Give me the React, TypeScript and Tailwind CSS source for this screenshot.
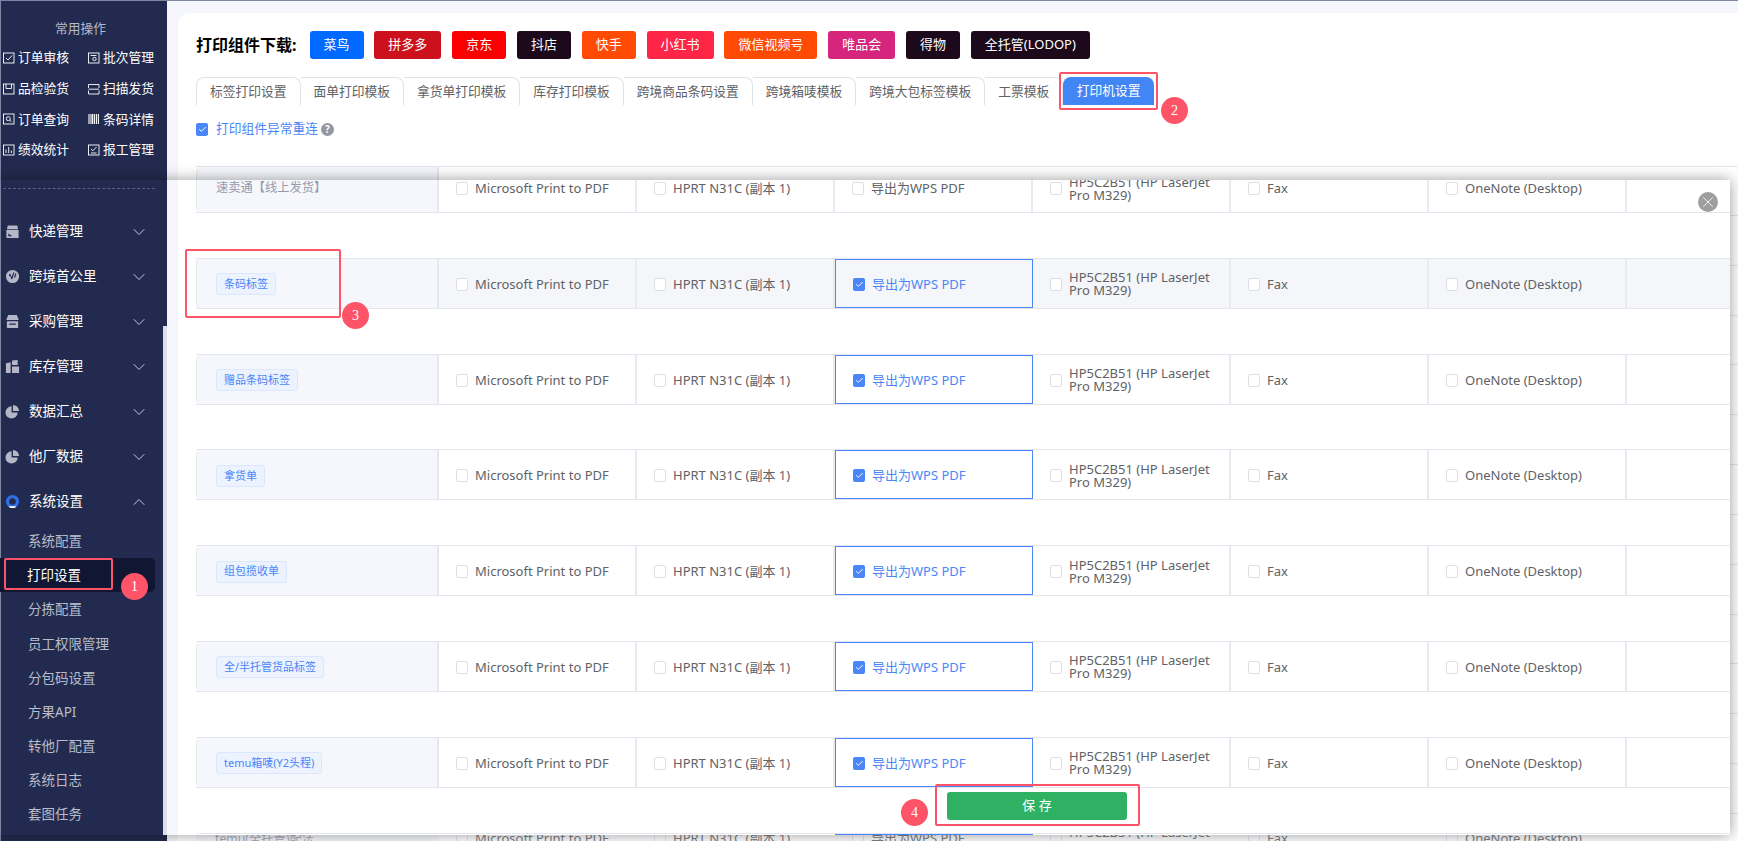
import type { ReactNode } from 'react';
import { ChevronDown, ChevronUp, X, Check } from 'lucide-react';

const FONT = "font-['Noto_Sans','Noto_Sans_CJK_SC',sans-serif]";

const PRINTERS = ['Microsoft Print to PDF', 'HPRT N31C (副本 1)', '导出为WPS PDF', 'HP5C2B51 (HP LaserJet Pro M329)', 'Fax', 'OneNote (Desktop)'];

const DOWNLOADS = [
  { name: '菜鸟', color: 'bg-[#0069ff]' },
  { name: '拼多多', color: 'bg-[#cc101c]' },
  { name: '京东', color: 'bg-[#fa0000]' },
  { name: '抖店', color: 'bg-[#1c0a1c]' },
  { name: '快手', color: 'bg-[#ff4a06]' },
  { name: '小红书', color: 'bg-[#ff2546]' },
  { name: '微信视频号', color: 'bg-[#ff4a06]' },
  { name: '唯品会', color: 'bg-[#d5257c]' },
  { name: '得物', color: 'bg-[#1c0a1c]' },
  { name: '全托管(LODOP)', color: 'bg-[#1c0a1c]' },
];

const TABS = ['标签打印设置', '面单打印模板', '拿货单打印模板', '库存打印模板', '跨境商品条码设置', '跨境箱唛模板', '跨境大包标签模板', '工票模板'];

const ROWS = [
  { label: '速卖通【线上发货】', plain: true },
  { label: '条码标签', highlight: true },
  { label: '赠品条码标签' },
  { label: '拿货单' },
  { label: '组包揽收单' },
  { label: '全/半托管货品标签' },
  { label: 'temu箱唛(Y2头程)' },
];

const SUB_MENU = ['系统配置', '打印设置', '分拣配置', '员工权限管理', '分包码设置', '方果API', '转他厂配置', '系统日志', '套图任务'];

function QuickIcon({ children }: { children: ReactNode }) {
  return (
    <svg viewBox="0 0 12 12" className="w-3 h-3 shrink-0" fill="none" stroke="#fff" strokeWidth="0.9">
      {children}
    </svg>
  );
}

const QUICK_OPS: { name: string; icon: ReactNode }[] = [
  { name: '订单审核', icon: <><rect x="0.5" y="1" width="10.5" height="10" /><path d="M3 6l2 2 4-4.5" /></> },
  { name: '批次管理', icon: <><rect x="0.5" y="1" width="10.5" height="10" /><path d="M2.5 3.5h6" /><circle cx="6.5" cy="7" r="1.7" /></> },
  { name: '品检验货', icon: <><rect x="0.5" y="1" width="10.5" height="10" /><path d="M3 1v4.5h5.5V1" /></> },
  { name: '扫描发货', icon: <><path d="M0.5 5V1.5h10.5V5M0.5 7.5V11h10.5V7.5" /><path d="M0.5 6.2h10.5" /></> },
  { name: '订单查询', icon: <><rect x="0.5" y="1" width="10.5" height="10" /><circle cx="5.3" cy="5.7" r="2" /><path d="M6.8 7.2l1.7 1.6" /></> },
  { name: '条码详情', icon: <path d="M1 1v10M3 1v10M4.6 1v10M6.4 1v10M8.4 1v10M10.4 1v10" strokeWidth="1.1" /> },
  { name: '绩效统计', icon: <><rect x="0.5" y="1" width="10.5" height="10" /><path d="M3 9V5.5M5.7 9V3M8.4 9V6.5" /></> },
  { name: '报工管理', icon: <><rect x="0.5" y="1" width="10.5" height="10" /><path d="M3 5l1.8 1.8L8.5 3M3 9h5.5" /></> },
];

const BoxIcon = (
  <path d="M2 5.500l1-4h10l1 4zM1.500 6.500h13V14a1 1 0 0 1-1 1h-11a1 1 0 0 1-1-1zM3.500 10.500v2.500h3.500v-1.200H4.800V10.500z" fillRule="evenodd" />
);
const GlobeIcon = (
  <path d="M8 1a7 7 0 1 0 0 14A7 7 0 0 0 8 1zM4 7l1.500-2.500 1.500 4 2-5 1 .500-2.300 7-1.200-.500-1-3.500-.500 1zM11 4.500l1.200.800-1.500 4.200-1-.500z" fillRule="evenodd" />
);
const StoreIcon = (
  <path d="M3.500 1h9l2 4.500a1 1 0 0 1-1 1h-11a1 1 0 0 1-1-1zM2 7.800h12V14a1 1 0 0 1-1 1H3a1 1 0 0 1-1-1zM4.500 10v1.500h7V10z" fillRule="evenodd" />
);
const StockIcon = <path d="M1 4.500l5-1V15H1zM7.500 1.500l6-.5v5.500h-6zM7.500 8H15V15H7.500z" />;
const PieIcon = <path d="M7 2.500A6.500 6.500 0 1 0 13.500 9H7zM8.500 1A6.500 6.500 0 0 1 15 7.500H8.500z" />;

const MENU: { name: string; icon: ReactNode }[] = [
  { name: '快递管理', icon: BoxIcon },
  { name: '跨境首公里', icon: GlobeIcon },
  { name: '采购管理', icon: StoreIcon },
  { name: '库存管理', icon: StockIcon },
  { name: '数据汇总', icon: PieIcon },
  { name: '他厂数据', icon: PieIcon },
];

function Badge({ n, className }: { n: number; className: string }) {
  return (
    <div className={`absolute w-[27px] h-[27px] rounded-full bg-[#ff5468] text-white flex items-center justify-center text-[14px] font-['Liberation_Serif',serif] ${className}`}>
      {n}
    </div>
  );
}

function Box({ className }: { className: string }) {
  return <div className={`absolute border-2 border-[#ff5468] rounded-[2px] ${className}`} />;
}

function Tick({ checked }: { checked?: boolean }) {
  if (checked) {
    return (
      <span className="w-3 h-[13px] shrink-0 rounded-[2px] bg-[#4a86f7] flex items-center justify-center">
        <Check size={9} color="#fff" strokeWidth={2.5} />
      </span>
    );
  }
  return <span className="w-3 h-[13px] shrink-0 rounded-[2px] border border-[#dcdfe6] bg-white" />;
}

function PrinterCell({ name, checked }: { name: string; checked?: boolean }) {
  return (
    <div className={`w-[198px] h-full shrink-0 flex items-center gap-[7px] pt-[2px] pl-[17px] pr-2 text-[13px] leading-[13px] ${checked ? 'border border-[#4a86f7] text-[#4a86f7]' : 'border-r-2 border-[#e8eaf0] text-[#606266]'}`}>
      <Tick checked={checked} />
      <span>{name}</span>
    </div>
  );
}

function PrinterRow({ label, plain, highlight, noneChecked }: { label: string; plain?: boolean; highlight?: boolean; noneChecked?: boolean }) {
  return (
    <div className={`flex items-stretch h-[51px] mb-[44.8px] border-y border-[#e4e6ef] ${highlight ? 'bg-[#f5f6fa]' : ''}`}>
      <div className="w-[243px] shrink-0 flex items-center pt-[2px] pl-[19px] bg-[#f6f7fc] border-l border-r-2 border-[#e6e8f0] rounded-l-[5px]">
        {plain ? (
          <span className="text-[12.25px] text-[#9499ab]">{label}</span>
        ) : (
          <span className="h-[22px] px-[7px] flex items-center rounded-[3px] bg-[#ecf3ff] border border-[#dbe7fd] text-[11px] text-[#4a86f7]">{label}</span>
        )}
      </div>
      {PRINTERS.map((p, i) => (
        <PrinterCell key={p} name={p} checked={i === 2 && !noneChecked} />
      ))}
    </div>
  );
}

export default function App() {
  return (
    <div className={`relative h-[841px] overflow-hidden bg-white ${FONT}`}>
      <div className="h-px bg-[#7d86a0]" />
      <div className="flex h-[840px]">
        {/* sidebar behind the popup */}
        <div className="w-[167px] shrink-0 bg-[#222b4f] border-l border-[#7d86a0] pt-[19px]">
          <div className="text-center text-[12.75px] leading-4 text-[#b6bac8] pr-[7px]">常用操作</div>
          <div className="grid grid-cols-[85px_1fr] gap-y-[12.6px] mt-[13px] pl-[2px]">
            {QUICK_OPS.map(op => (
              <div key={op.name} className="flex items-center gap-[3px] h-[18px] text-[12.75px] text-white">
                <QuickIcon>{op.icon}</QuickIcon>
                {op.name}
              </div>
            ))}
          </div>
        </div>

        {/* page behind the popup */}
        <div className="flex-1 bg-[#f6f7fc] pt-3 pl-[11px]">
          <div className="h-full bg-white rounded-tl-[12px] pl-[18px] pt-[18px]">
            <div className="flex items-center h-7">
              <span className="text-[16px] font-bold text-black mr-[13px]">打印组件下载:</span>
              <div className="flex gap-[10.8px]">
                {DOWNLOADS.map(d => (
                  <span key={d.name} className={`h-7 px-[14px] flex items-center rounded-[3px] text-[13px] text-white whitespace-nowrap ${d.color}`}>{d.name}</span>
                ))}
              </div>
            </div>

            <div className="flex h-7 mt-[18px]">
              {TABS.map((t, i) => (
                <span key={t} className={`px-[13px] flex items-center border-t border-r border-[#dfe2ea] rounded-tr-[8px] text-[12.75px] text-[#606266] whitespace-nowrap ${i === 0 ? 'border-l rounded-tl-[8px]' : ''}`}>{t}</span>
              ))}
              <span className="px-[13.5px] flex items-center rounded-tr-[8px] rounded-tl-[8px] bg-[#4285f4] text-[12.75px] text-white">打印机设置</span>
            </div>

            <div className="flex items-center h-4 mt-[16px]">
              <Tick checked />
              <span className="ml-2 text-[12.75px] text-[#4a86f7]">打印组件异常重连</span>
              <span className="ml-[3px] w-[13px] h-[13px] rounded-full bg-[#94979f] text-white text-[10px] font-bold flex items-center justify-center">?</span>
            </div>

            <div className="mt-[29px]">
              <div className="flex h-[49.85px] border-y border-[#e4e6ef]">
                <div className="w-[243px] bg-[#f6f7fc] border-l border-r-2 border-[#e6e8f0] rounded-tl-[5px]" />
              </div>
              {Array.from({ length: 12 }).map((_, i) => (
                <div key={i} className="h-[49.85px] border-b border-[#e4e6ef]" />
              ))}
              <div className="flex h-[49.85px] text-[13px] text-[#606266] opacity-80">
                <div className="w-[243px] shrink-0 flex items-center pl-[19px] bg-[#f6f7fc] text-[12.25px] text-[#9499ab]">temu(全托管)配法</div>
                {PRINTERS.map(p => (
                  <div key={p} className="w-[198px] shrink-0 flex items-center gap-[7px] pl-[17px] pr-2 leading-[13px]">
                    <Tick />
                    <span>{p}</span>
                  </div>
                ))}
              </div>
            </div>
          </div>
        </div>
      </div>

      {/* second screenshot lying over the page */}
      <div className="absolute left-0 top-[180px] w-[1730px] h-[655px] flex overflow-hidden bg-white shadow-[0_0_14px_rgba(0,0,0,0.4)]">
        <div className="relative w-[167px] shrink-0 bg-[#222b4f] border-l border-[#7d86a0]">
          <div className="border-t border-dashed border-[#5a6280] mt-2 ml-[2px] mr-3" />
          <div className="mt-[20px]">
            {MENU.map(m => (
              <div key={m.name} className="h-[45px] flex items-center pl-[4px] pr-[18px] text-[13.5px] text-white">
                <svg viewBox="0 0 16 16" className="w-[15px] h-[15px] shrink-0" fill="#b4b7c7">{m.icon}</svg>
                <span className="ml-[9px] flex-1">{m.name}</span>
                <ChevronDown size={20} color="#c5c8d4" strokeWidth={1.2} />
              </div>
            ))}
            <div className="h-[45px] flex items-center pl-[4px] pr-[18px] text-[13.5px] text-white">
              <svg viewBox="0 0 16 16" className="w-[15px] h-[15px] shrink-0">
                <circle cx="8" cy="8" r="7" fill="#2f6fe4" />
                <circle cx="8" cy="8" r="3.500" fill="#222b4f" />
                <path d="M4 13h8l-1.500 2h-5z" fill="#fff" />
              </svg>
              <span className="ml-[9px] flex-1">系统设置</span>
              <ChevronUp size={20} color="#c5c8d4" strokeWidth={1.2} />
            </div>
          </div>
          <div>
            {SUB_MENU.map((s, i) => (
              <div key={s} className={`h-[34.2px] flex items-center pl-[27px] mr-[12px] text-[13.5px] ${i === 1 ? 'bg-[#111733] text-white rounded-r-[5px] -ml-px' : 'text-[#b9bdca]'}`}>{s}</div>
            ))}
          </div>
          <div className="absolute right-0 top-[146px] bottom-0 w-1 bg-[#dcdee8]" />
        </div>

        <div className="w-[11px] shrink-0 bg-[#f6f7fc]" />

        <div className="flex-1 pl-[18px] -mt-[18px]">
          {ROWS.map((r, i) => (
            <PrinterRow key={r.label} label={r.label} plain={r.plain} highlight={r.highlight} noneChecked={i === 0} />
          ))}
          <div className="flex h-[3px] border-t border-[#e4e6ef] rounded-tl-[5px]">
            <div className="w-[639px] shrink-0" />
            <div className="w-[198px] border-t border-[#4a86f7]" />
          </div>
        </div>

        <div className="absolute right-[12px] top-[12px] w-5 h-5 rounded-full bg-[#9e9e9e] flex items-center justify-center">
          <X size={18} color="#fff" strokeWidth={1.1} />
        </div>
      </div>

      {/* save button */}
      <div className="absolute left-[947px] top-[792px] w-[180px] h-7 rounded-[3px] bg-[#2fb163] text-white text-[13px] flex items-center justify-center">保 存</div>

      {/* numbered guide marks */}
      <Box className="left-[4px] top-[558px] w-[109px] h-[32px]" />
      <Badge n={1} className="left-[121px] top-[573px]" />
      <Box className="left-[1059px] top-[72px] w-[99px] h-[38px]" />
      <Badge n={2} className="left-[1161px] top-[97px]" />
      <Box className="left-[185px] top-[249px] w-[156px] h-[69px]" />
      <Badge n={3} className="left-[342px] top-[302px]" />
      <Box className="left-[935px] top-[784px] w-[205px] h-[42px]" />
      <Badge n={4} className="left-[901px] top-[799px]" />
    </div>
  );
}
